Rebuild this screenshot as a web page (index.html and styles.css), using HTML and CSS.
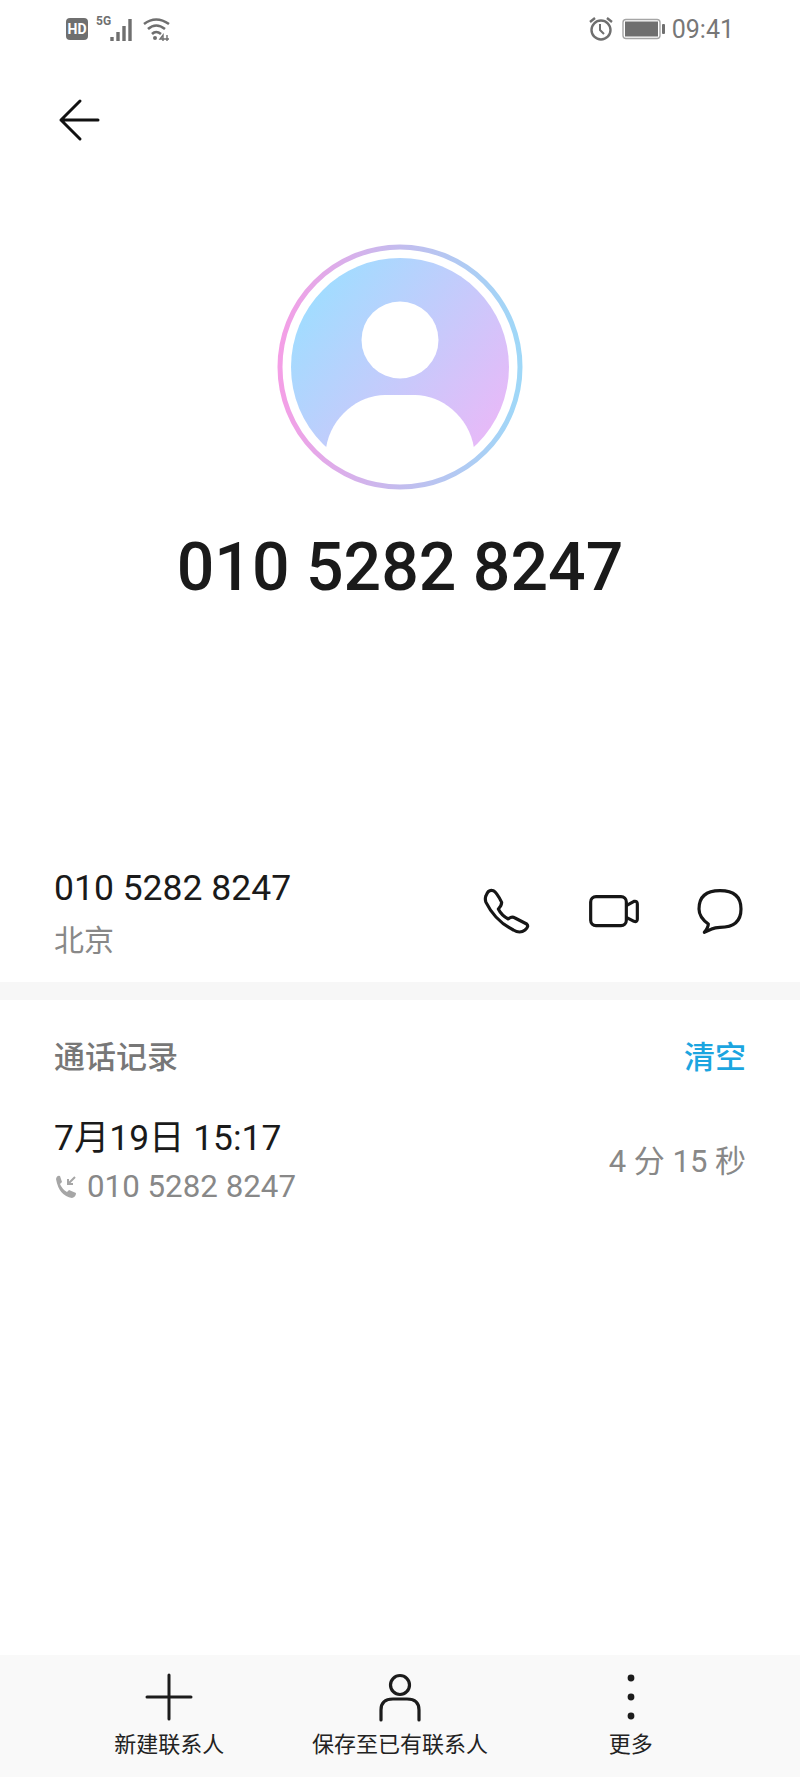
FILE: index.html
```html
<!DOCTYPE html>
<html lang="zh-CN">
<head>
    <meta charset="UTF-8">
    <meta name="viewport" content="width=device-width, initial-scale=1.0">
    <title>010 5282 8247</title>
    <link rel="stylesheet" href="styles.css">
</head>
<body>
<div class="page">
    <div class="status">
        <div class="status-left">
            <span class="hd">HD</span>
            <span class="net">5G</span>
            <svg class="signal" width="26" height="26" viewBox="0 0 26 26"><path d="M2 25v-4M8 25v-9M14 25v-15M20 25v-22" stroke="#6f6f6f" stroke-width="3.4" fill="none"/></svg>
            <svg class="wifi" width="30" height="26" viewBox="0 0 30 26" fill="none" stroke="#6f6f6f" stroke-width="2.6"><path d="M2 8Q14 -1 27 8"/><path d="M6 13Q14 6 23 13"/><path d="M10 18Q14 14 19 18"/><circle cx="13" cy="22" r="2" fill="#6f6f6f" stroke="none"/><path d="M21 25v-6l-3 4h9M25 19v6" stroke-width="1.4"/></svg>
        </div>
        <div class="status-right">
            <svg width="26" height="26" viewBox="0 0 26 26" fill="none" stroke="#6f6f6f" stroke-width="2.4"><circle cx="13" cy="14" r="9.5"/><path d="M12 8v6l4 4" stroke-width="2"/><path d="M2 6l5-4M24 6l-5-4"/></svg>
            <svg class="battery" width="43" height="22" viewBox="0 0 43 22"><rect x="1" y="1.500" width="37" height="19" rx="3" fill="none" stroke="#a5a5a5" stroke-width="1.400"/><rect x="3" y="3.500" width="33" height="15" fill="#6f6f6f"/><rect x="40" y="6" width="3" height="10" rx="1" fill="#6f6f6f"/></svg>
            <span class="time">09:41</span>
        </div>
    </div>

    <div class="topbar">
        <svg width="44" height="44" viewBox="0 0 44 44" fill="none" stroke="#111" stroke-width="3" stroke-linecap="round" stroke-linejoin="round"><path d="M22 3L3 22l19 19M3 22h37"/></svg>
    </div>

    <div class="hero">
        <svg class="avatar" width="246" height="246" viewBox="0 0 246 246">
            <defs>
                <linearGradient id="ring" x1="0" y1="0.500" x2="1" y2="0.500">
                    <stop offset="0" stop-color="#f49fe6"/>
                    <stop offset="0.500" stop-color="#c3bcee"/>
                    <stop offset="1" stop-color="#9fd8f8"/>
                </linearGradient>
                <linearGradient id="fill" x1="0.100" y1="0.200" x2="0.900" y2="0.800">
                    <stop offset="0" stop-color="#a2dcff"/>
                    <stop offset="1" stop-color="#e6baf8"/>
                </linearGradient>
            </defs>
            <circle cx="123" cy="123" r="120" fill="none" stroke="url(#ring)" stroke-width="5"/>
            <circle cx="123" cy="123" r="109" fill="url(#fill)"/>
            <circle cx="123" cy="96" r="38.500" fill="#fff"/>
            <path d="M49 204C54 172 82 151 108 151H138C164 151 192 172 197 204C178 222 152 233 123 233C94 233 68 222 49 204Z" fill="#fff"/>
        </svg>
        <h1 class="name">010 5282 8247</h1>
    </div>

    <div class="contact">
        <div class="contact-text">
            <div class="number">010 5282 8247</div>
            <div class="place">北京</div>
        </div>
        <div class="actions">
            <svg width="54" height="54" viewBox="60 79 162 162" fill="none" stroke="#161616" stroke-width="9.500" stroke-linejoin="round"><path d="M78 105Q85 85 100 90Q110 95 125 125Q125 135 115 145Q125 165 145 175Q155 165 165 172L200 190Q208 197 195 208Q180 220 160 208Q105 180 78 125Q74 115 78 105Z"/></svg>
            <svg width="54" height="54" viewBox="379 79 162 162" fill="none" stroke="#161616" stroke-width="9.500" stroke-linejoin="round"><rect x="390" y="108" width="107" height="87" rx="16"/><path d="M497 135L520 122Q530 120 530 130V175Q530 185 520 182L497 170"/></svg>
            <svg width="54" height="54" viewBox="699 79 162 162" fill="none" stroke="#161616" stroke-width="9.500" stroke-linejoin="round"><path d="M745 190Q717 170 717 145Q717 90 780 90Q843 90 843 145Q843 200 780 200Q765 200 755 205L733 215Q745 200 745 190Z"/></svg>
        </div>
    </div>

    <div class="divider"></div>

    <div class="log-head">
        <span class="log-title">通话记录</span>
        <span class="log-clear">清空</span>
    </div>

    <div class="log-item">
        <div>
            <div class="log-date">7月19日 15:17</div>
            <div class="log-sub">
                <svg width="26" height="26" viewBox="0 0 26 26" fill="#a6a6a6"><path d="M2 5Q3 1 6 2L8 8L6 10Q8 15 13 18L15 16L22 19Q22 23 18 24Q5 22 2 5Z"/><path d="M21 3L14 10M14 5v5h5" fill="none" stroke="#a6a6a6" stroke-width="2"/></svg>
                <span>010 5282 8247</span>
            </div>
        </div>
        <div class="log-duration">4 分 15 秒</div>
    </div>

    <div class="tabbar">
        <div class="tab">
            <svg width="56" height="56" viewBox="0 0 56 56" fill="none" stroke="#1c1c1c" stroke-width="3" stroke-linecap="round"><path d="M6 28h44M28 6v44"/></svg>
            <span>新建联系人</span>
        </div>
        <div class="tab">
            <svg width="56" height="56" viewBox="0 0 56 56" fill="none" stroke="#1c1c1c" stroke-width="3.200" stroke-linecap="round"><circle cx="28" cy="16" r="9.500"/><path d="M9 51V41Q9 30 21 30H35Q47 30 47 41V51"/></svg>
            <span>保存至已有联系人</span>
        </div>
        <div class="tab">
            <svg width="56" height="56" viewBox="0 0 56 56" fill="#1c1c1c"><circle cx="28" cy="9" r="3.400"/><circle cx="28" cy="28" r="3.400"/><circle cx="28" cy="47" r="3.400"/></svg>
            <span>更多</span>
        </div>
    </div>
</div>
</body>
</html>
```

FILE: styles.css
```css
* {
    box-sizing: border-box;
}
body {
    margin: 0;
    background-color: #fff;
    font-family: Roboto, "Noto Sans CJK SC", sans-serif;
}
.page {
    display: flex;
    flex-direction: column;
    height: 1777px;
    overflow: hidden;
}
.status {
    display: flex;
    justify-content: space-between;
    align-items: center;
    height: 58px;
    padding: 0 66px;
    color: #6f6f6f;
}
.status-left,
.status-right {
    display: flex;
    align-items: center;
}
.hd {
    width: 22px;
    height: 22px;
    border-radius: 4px;
    background-color: #6f6f6f;
    color: #fff;
    font-size: 14px;
    font-weight: 700;
    line-height: 22px;
    text-align: center;
}
.net {
    margin: -16px 0 0 8px;
    font-size: 12px;
    font-weight: 700;
}
.signal {
    margin-left: -1px;
}
.wifi {
    margin-left: 6px;
}
.battery {
    margin-left: 8px;
}
.time {
    margin: 0 0 0 7px;
    font-size: 25px;
    color: #777;
}
.topbar {
    padding: 40px 0 0 58px;
    height: 105px;
}
.topbar svg {
    display: block;
}
.hero {
    display: flex;
    flex-direction: column;
    align-items: center;
    margin-top: 81px;
}
.avatar {
    display: block;
}
.name {
    margin: 38px 0 0;
    font-size: 66.200px;
    font-weight: 500;
    line-height: 80px;
    color: #1a1a1a;
}
.contact {
    display: flex;
    justify-content: space-between;
    align-items: center;
    height: 137px;
    margin-top: 237px;
    padding: 0 53px 0 54px;
}
.number {
    font-size: 35.500px;
    line-height: 46px;
    color: #1a1a1a;
}
.place {
    margin-top: 8px;
    font-size: 30px;
    line-height: 44px;
    color: #888;
}
.actions {
    display: flex;
    gap: 52.500px;
}
.divider {
    height: 18px;
    background-color: #f7f7f7;
}
.log-head {
    display: flex;
    justify-content: space-between;
    align-items: center;
    margin-top: 37px;
    padding: 0 54px;
    line-height: 42px;
}
.log-title {
    font-size: 31px;
    font-weight: 500;
    color: #777;
}
.log-clear {
    font-size: 31px;
    font-weight: 500;
    color: #1ba5e0;
}
.log-item {
    display: flex;
    justify-content: space-between;
    align-items: center;
    margin-top: 36px;
    padding: 0 54px;
}
.log-date {
    font-size: 35.400px;
    line-height: 46px;
    color: #1a1a1a;
}
.log-sub {
    display: flex;
    align-items: center;
    gap: 7px;
    margin-top: 5px;
    font-size: 31.300px;
    line-height: 42px;
    color: #888;
}
.log-duration {
    margin-bottom: 6px;
    font-size: 31px;
    color: #888;
}
.tabbar {
    display: grid;
    grid-template-columns: repeat(3, 1fr);
    height: 122px;
    margin-top: auto;
    padding: 14px 54px 0;
    background-color: #f9f9f9;
}
.tab {
    display: flex;
    flex-direction: column;
    align-items: center;
    font-size: 22px;
    line-height: 30px;
    color: #222;
}
.tab svg {
    display: block;
    margin-bottom: 5px;
}
```
